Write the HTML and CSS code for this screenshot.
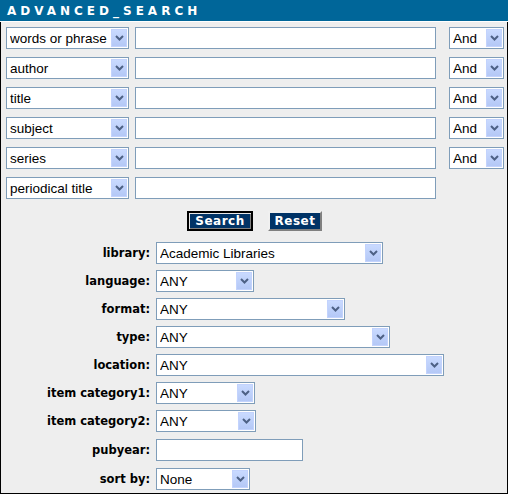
FILE: index.html
```html
<!DOCTYPE html>
<html>
<head>
<meta charset="utf-8">
<link rel="stylesheet" href="styles.css">
</head>
<body>
<div class="panel">
  <div class="header">ADVANCED_SEARCH</div>
  <div class="terms">
    <div class="term-row">
      <div class="sel sel-field"><select><option>words or phrase</option></select><span class="arrow"><svg width="9" height="6" viewBox="0 0 9 6"><path d="M1 1 L4.5 4.5 L8 1" fill="none" stroke="#4d6185" stroke-width="2"/></svg></span></div>
      <input class="txt term" type="text">
      <div class="sel sel-bool"><select><option>And</option></select><span class="arrow"><svg width="9" height="6" viewBox="0 0 9 6"><path d="M1 1 L4.5 4.5 L8 1" fill="none" stroke="#4d6185" stroke-width="2"/></svg></span></div>
    </div>
    <div class="term-row">
      <div class="sel sel-field"><select><option>author</option></select><span class="arrow"><svg width="9" height="6" viewBox="0 0 9 6"><path d="M1 1 L4.5 4.5 L8 1" fill="none" stroke="#4d6185" stroke-width="2"/></svg></span></div>
      <input class="txt term" type="text">
      <div class="sel sel-bool"><select><option>And</option></select><span class="arrow"><svg width="9" height="6" viewBox="0 0 9 6"><path d="M1 1 L4.5 4.5 L8 1" fill="none" stroke="#4d6185" stroke-width="2"/></svg></span></div>
    </div>
    <div class="term-row">
      <div class="sel sel-field"><select><option>title</option></select><span class="arrow"><svg width="9" height="6" viewBox="0 0 9 6"><path d="M1 1 L4.5 4.5 L8 1" fill="none" stroke="#4d6185" stroke-width="2"/></svg></span></div>
      <input class="txt term" type="text">
      <div class="sel sel-bool"><select><option>And</option></select><span class="arrow"><svg width="9" height="6" viewBox="0 0 9 6"><path d="M1 1 L4.5 4.5 L8 1" fill="none" stroke="#4d6185" stroke-width="2"/></svg></span></div>
    </div>
    <div class="term-row">
      <div class="sel sel-field"><select><option>subject</option></select><span class="arrow"><svg width="9" height="6" viewBox="0 0 9 6"><path d="M1 1 L4.5 4.5 L8 1" fill="none" stroke="#4d6185" stroke-width="2"/></svg></span></div>
      <input class="txt term" type="text">
      <div class="sel sel-bool"><select><option>And</option></select><span class="arrow"><svg width="9" height="6" viewBox="0 0 9 6"><path d="M1 1 L4.5 4.5 L8 1" fill="none" stroke="#4d6185" stroke-width="2"/></svg></span></div>
    </div>
    <div class="term-row">
      <div class="sel sel-field"><select><option>series</option></select><span class="arrow"><svg width="9" height="6" viewBox="0 0 9 6"><path d="M1 1 L4.5 4.5 L8 1" fill="none" stroke="#4d6185" stroke-width="2"/></svg></span></div>
      <input class="txt term" type="text">
      <div class="sel sel-bool"><select><option>And</option></select><span class="arrow"><svg width="9" height="6" viewBox="0 0 9 6"><path d="M1 1 L4.5 4.5 L8 1" fill="none" stroke="#4d6185" stroke-width="2"/></svg></span></div>
    </div>
    <div class="term-row">
      <div class="sel sel-field"><select><option>periodical title</option></select><span class="arrow"><svg width="9" height="6" viewBox="0 0 9 6"><path d="M1 1 L4.5 4.5 L8 1" fill="none" stroke="#4d6185" stroke-width="2"/></svg></span></div>
      <input class="txt term" type="text">
    </div>
  </div>
  <div class="buttons">
    <button class="btn btn-default" type="button">Search</button>
    <button class="btn btn-reset" type="button">Reset</button>
  </div>
  <div class="limits">
    <label class="lbl">library:</label>
    <div class="sel w-library"><select><option>Academic Libraries</option></select><span class="arrow"><svg width="9" height="6" viewBox="0 0 9 6"><path d="M1 1 L4.5 4.5 L8 1" fill="none" stroke="#4d6185" stroke-width="2"/></svg></span></div>
    <label class="lbl">language:</label>
    <div class="sel w-language"><select><option>ANY</option></select><span class="arrow"><svg width="9" height="6" viewBox="0 0 9 6"><path d="M1 1 L4.5 4.5 L8 1" fill="none" stroke="#4d6185" stroke-width="2"/></svg></span></div>
    <label class="lbl">format:</label>
    <div class="sel w-format"><select><option>ANY</option></select><span class="arrow"><svg width="9" height="6" viewBox="0 0 9 6"><path d="M1 1 L4.5 4.5 L8 1" fill="none" stroke="#4d6185" stroke-width="2"/></svg></span></div>
    <label class="lbl">type:</label>
    <div class="sel w-type"><select><option>ANY</option></select><span class="arrow"><svg width="9" height="6" viewBox="0 0 9 6"><path d="M1 1 L4.5 4.5 L8 1" fill="none" stroke="#4d6185" stroke-width="2"/></svg></span></div>
    <label class="lbl">location:</label>
    <div class="sel w-location"><select><option>ANY</option></select><span class="arrow"><svg width="9" height="6" viewBox="0 0 9 6"><path d="M1 1 L4.5 4.5 L8 1" fill="none" stroke="#4d6185" stroke-width="2"/></svg></span></div>
    <label class="lbl">item category1:</label>
    <div class="sel w-cat1"><select><option>ANY</option></select><span class="arrow"><svg width="9" height="6" viewBox="0 0 9 6"><path d="M1 1 L4.5 4.5 L8 1" fill="none" stroke="#4d6185" stroke-width="2"/></svg></span></div>
    <label class="lbl">item category2:</label>
    <div class="sel w-cat2"><select><option>ANY</option></select><span class="arrow"><svg width="9" height="6" viewBox="0 0 9 6"><path d="M1 1 L4.5 4.5 L8 1" fill="none" stroke="#4d6185" stroke-width="2"/></svg></span></div>
    <label class="lbl">pubyear:</label>
    <input class="txt w-pubyear" type="text">
    <label class="lbl">sort by:</label>
    <div class="sel w-sort"><select><option>None</option></select><span class="arrow"><svg width="9" height="6" viewBox="0 0 9 6"><path d="M1 1 L4.5 4.5 L8 1" fill="none" stroke="#4d6185" stroke-width="2"/></svg></span></div>
  </div>
</div>
</body>
</html>
```
FILE: styles.css
```css
html, body {
  margin: 0;
  padding: 0;
  background: #ffffff;
}

.panel {
  width: 508px;
  height: 494px;
  box-sizing: border-box;
  border: 1px solid #000000;
  border-top: none;
  background: #eeeeee;
  font-family: "Liberation Sans", Arial, sans-serif;
}

.header {
  height: 21px;
  margin: 0 -1px;
  background: #006699;
  color: #ffffff;
  font-family: "DejaVu Sans", Verdana, sans-serif;
  font-weight: bold;
  font-size: 12px;
  letter-spacing: 4px;
  line-height: 23px;
  padding-left: 7px;
  border-bottom: 1px solid #ffffff;
}

.terms {
  display: flex;
  flex-direction: column;
  gap: 8px;
  padding: 5px 0 0 5px;
}

.term-row {
  display: flex;
  height: 22px;
}

.sel {
  position: relative;
  height: 22px;
  box-sizing: border-box;
}

.sel select {
  appearance: none;
  -webkit-appearance: none;
  width: 100%;
  height: 100%;
  box-sizing: border-box;
  margin: 0;
  border: 1px solid #7f9db9;
  background: #ffffff;
  font-family: "Liberation Sans", Arial, sans-serif;
  font-size: 13.5px;
  color: #000000;
  padding: 0 0 0 3px;
  border-radius: 0;
  outline: none;
}

.arrow {
  position: absolute;
  top: 2px;
  right: 2px;
  width: 16px;
  height: 18px;
  box-sizing: border-box;
  border: 1px solid #c3d3fd;
  background: linear-gradient(#c9daff, #b4c8f6);
  display: flex;
  align-items: center;
  justify-content: center;
  pointer-events: none;
}

.arrow svg {
  display: block;
}

.sel-field {
  width: 123px;
  margin-right: 6px;
}

.txt {
  height: 22px;
  box-sizing: border-box;
  margin: 0;
  border: 1px solid #7f9db9;
  background: #ffffff;
  padding: 0 3px;
  font-family: "Liberation Sans", Arial, sans-serif;
  font-size: 13px;
  outline: none;
}

.term {
  width: 301px;
}

.sel-bool {
  width: 55px;
  margin-left: 13px;
}

.buttons {
  display: flex;
  justify-content: center;
  gap: 15px;
  margin-top: 12px;
  margin-left: 1px;
}

.btn {
  height: 20px;
  box-sizing: border-box;
  margin: 0;
  padding: 0;
  background: #003366;
  color: #ffffff;
  font-family: "DejaVu Sans", Verdana, sans-serif;
  font-weight: bold;
  font-size: 12px;
  letter-spacing: 0.5px;
  border: 2px solid;
  border-color: #f0f0f0 #808080 #808080 #f0f0f0;
}

.btn-reset {
  width: 54px;
}

.btn-default {
  width: 66px;
  border-color: #000000;
  box-shadow: inset 1px 1px 0 #e8e8e8, inset -1px -1px 0 #808080;
}

.limits {
  display: grid;
  grid-template-columns: 149px auto;
  column-gap: 6px;
  row-gap: 6px;
  align-items: center;
  justify-items: start;
  margin-top: 11px;
}

.lbl {
  justify-self: end;
  font-family: "DejaVu Sans", Verdana, sans-serif;
  font-weight: bold;
  font-size: 11.5px;
  color: #000000;
}

.w-library { width: 227px; }
.w-language { width: 98px; }
.w-format { width: 189px; }
.w-type { width: 234px; }
.w-location { width: 288px; }
.w-cat1 { width: 99px; }
.w-cat2 { width: 100px; }
.w-pubyear { width: 147px; margin: 1px 0; }
.w-sort { width: 94px; }
```
